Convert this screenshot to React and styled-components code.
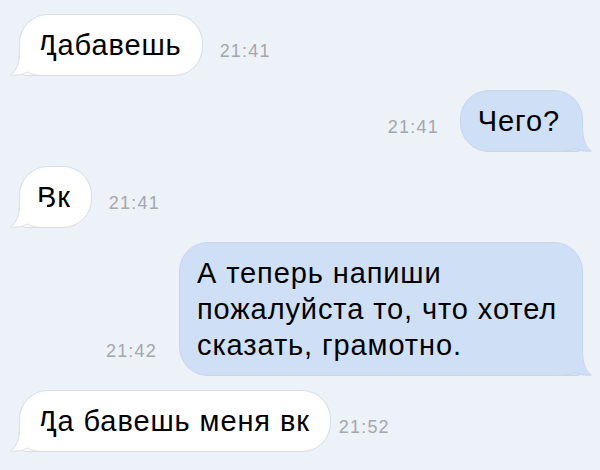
import React from "react";
import styled, { createGlobalStyle } from "styled-components";

const GlobalStyle = createGlobalStyle`
  html, body {
    margin: 0;
    padding: 0;
    background: #edf1f8;
  }
  * {
    box-sizing: border-box;
  }
`;

const messages = [
  { id: 1, out: false, text: "Дабавешь", time: "21:41", gap: 17 },
  { id: 2, out: true, text: "Чего?", time: "21:41", gap: 21 },
  { id: 3, out: false, text: "Вк", time: "21:41", gap: 17 },
  {
    id: 4,
    out: true,
    text: "А теперь напиши пожалуйста то, что хотел сказать, грамотно.",
    time: "21:42",
    gap: 22,
  },
  { id: 5, out: false, text: "Да бавешь меня вк", time: "21:52", gap: 8 },
];

export default function App() {
  return (
    <>
      <GlobalStyle />
      <Screen>
        {messages.map((m) => (
          <Row key={m.id} $out={m.out} $gap={m.gap}>
            <Bubble $out={m.out}>
              {m.text}
              <Tail $out={m.out} />
            </Bubble>
            <Time>{m.time}</Time>
          </Row>
        ))}
      </Screen>
    </>
  );
}

function Tail({ $out }) {
  const fill = $out ? "#cfdff6" : "#ffffff";
  const stroke = $out ? "#c6d6ee" : "#d9dde4";
  return (
    <TailSvg $out={$out} width="40" height="30" viewBox="0 0 40 30">
      <path
        d="M10.5,4 C10.5,19 7,25 1.5,29 C8,29.8 14,28.5 18.5,26 C23,29 28,29.5 38,29.5 L38,4 Z"
        fill={fill}
      />
      <path
        d="M10.5,4 C10.5,19 7,25 1.5,29 C8,29.8 14,28.5 18.5,26 C23,29 28,29.5 38,29.5"
        fill="none"
        stroke={stroke}
        strokeWidth="1"
      />
    </TailSvg>
  );
}

const Screen = styled.div`
  width: 600px;
  height: 470px;
  overflow: hidden;
  background: #edf1f8;
  padding: 14px 17px 0 19px;
  display: flex;
  flex-direction: column;
  gap: 14px;
  font-family: "Liberation Sans", Arial, sans-serif;
`;

const Row = styled.div`
  display: flex;
  flex-direction: ${(p) => (p.$out ? "row-reverse" : "row")};
  justify-content: flex-start;
  align-items: flex-end;
  gap: ${(p) => p.$gap}px;
`;

const Bubble = styled.div`
  position: relative;
  max-width: 404px;
  padding: 12px ${(p) => (p.$out ? "22px 12px 17px" : "20px 12px 17px")};
  font-size: 29px;
  line-height: 36px;
  letter-spacing: 0.9px;
  color: #000;
  background: ${(p) => (p.$out ? "#cfdff6" : "#ffffff")};
  border: 1px solid ${(p) => (p.$out ? "#c6d6ee" : "#d9dde4")};
  border-radius: 29px;
  ${(p) =>
    p.$out
      ? "border-bottom-right-radius: 6px;"
      : "border-bottom-left-radius: 6px;"}
`;

const TailSvg = styled.svg`
  position: absolute;
  bottom: -1px;
  ${(p) =>
    p.$out
      ? "right: -11px; transform: scaleX(-1);"
      : "left: -11px;"}
  pointer-events: none;
`;

const Time = styled.span`
  font-size: 18px;
  line-height: 18px;
  letter-spacing: 1.2px;
  color: #a4a7ad;
  margin-bottom: 16px;
  white-space: nowrap;
`;
